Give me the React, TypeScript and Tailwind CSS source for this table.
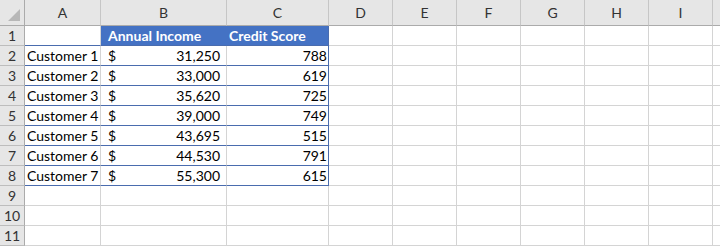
import React from "react";

const cols = ["A", "B", "C", "D", "E", "F", "G", "H", "I"];
const rows = [
  ["Customer 1", "31,250", "788"],
  ["Customer 2", "33,000", "619"],
  ["Customer 3", "35,620", "725"],
  ["Customer 4", "39,000", "749"],
  ["Customer 5", "43,695", "515"],
  ["Customer 6", "44,530", "791"],
  ["Customer 7", "55,300", "615"],
];

const font = { fontFamily: "Lato, 'Open Sans', 'Liberation Sans', sans-serif" };

export default function App() {
  const gridCols = "grid-cols-[25px_76px_126px_102px_64px_64px_64px_64px_64px_64px_1fr]";
  const cell = "h-[20px] border-r border-b border-[#d4d4d4] text-[14px] leading-[19px] text-black whitespace-nowrap overflow-hidden";
  const rowHead =
    "h-[20px] bg-[#e6e6e6] border-r border-b border-[#bdbdbd] text-[14px] leading-[19px] text-[#333] text-center";
  const blueLine = "border-b-[#4a6cae]";
  const blueRight = "border-r-[#4a6cae]";

  return (
    <div className="w-[720px] h-[247px] overflow-hidden bg-white" style={font}>
      <div className={`grid ${gridCols}`}>
        {/* corner */}
        <div className="h-[26px] bg-[#e6e6e6] border-r border-b border-[#ababab] relative">
          <svg className="absolute right-[4px] bottom-[4px]" width="12" height="12" viewBox="0 0 12 12">
            <polygon points="12,0 12,12 0,12" fill="#b7b7b7" />
          </svg>
        </div>
        {cols.map((c) => (
          <div
            key={c}
            className="h-[26px] bg-[#e6e6e6] border-r border-b border-[#c6c6c6] border-b-[#ababab] text-[14px] leading-[26px] text-[#333] text-center"
          >
            {c}
          </div>
        ))}
        <div className="h-[26px] bg-[#e6e6e6] border-b border-[#ababab]" />

        {/* row 1 */}
        <div className={`${rowHead} border-r-[#ababab]`}>1</div>
        <div className={`${cell} ${blueLine}`} />
        <div className={`${cell} ${blueLine} bg-[#4472c4] border-r-[#4472c4] text-white font-bold pl-[7px]`}>Annual Income</div>
        <div className={`${cell} ${blueLine} ${blueRight} bg-[#4472c4] text-white font-bold pl-[2px]`}>Credit Score</div>
        {cols.slice(3).map((c) => (
          <div key={c} className={cell} />
        ))}
        <div className="h-[20px] border-b border-[#d4d4d4]" />

        {rows.map((r, i) => (
          <React.Fragment key={i}>
            <div className={`${rowHead} border-r-[#ababab]`}>{i + 2}</div>
            <div className={`${cell} ${blueLine} pl-[2px]`}>{r[0]}</div>
            <div className={`${cell} ${blueLine} flex justify-between pl-[7px] pr-[6px]`}>
              <span>$</span>
              <span>{r[1]}</span>
            </div>
            <div className={`${cell} ${blueLine} ${blueRight} text-right pr-[1px]`}>{r[2]}</div>
            {cols.slice(3).map((c) => (
              <div key={c} className={cell} />
            ))}
            <div className="h-[20px] border-b border-[#d4d4d4]" />
          </React.Fragment>
        ))}

        {[9, 10, 11].map((n) => (
          <React.Fragment key={n}>
            <div className={`${rowHead} border-r-[#ababab]`}>{n}</div>
            {cols.map((c) => (
              <div key={c} className={cell} />
            ))}
            <div className="h-[20px] border-b border-[#d4d4d4]" />
          </React.Fragment>
        ))}
      </div>
    </div>
  );
}
